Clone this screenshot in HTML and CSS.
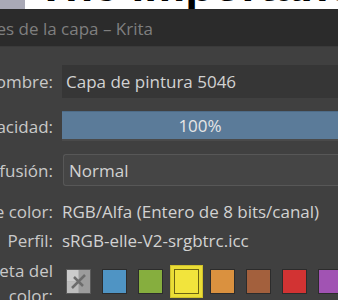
FILE: index.html
```html
<!DOCTYPE html>
<html lang="es">
<head>
  <meta charset="UTF-8">
  <title>Propiedades de la capa – Krita</title>
  <link rel="stylesheet" href="styles.css">
</head>
<body>
  <div class="backdrop">
    <div class="backdrop-tab"></div>
    <div class="backdrop-text">The importance</div>
  </div>

  <div class="titlebar">
    <div class="title">Propiedades de la capa – Krita</div>
  </div>

  <div class="dialog">
    <div class="row row-name">
      <div class="label">Nombre:</div>
      <div class="field">Capa de pintura 5046</div>
    </div>

    <div class="row row-opacity">
      <div class="label">Opacidad:</div>
      <div class="slider">100%</div>
    </div>

    <div class="row row-blend">
      <div class="label">Modo de fusión:</div>
      <div class="combo">Normal</div>
    </div>

    <div class="row row-space">
      <div class="label">Espacio de color:</div>
      <div class="value">RGB/Alfa (Entero de 8 bits/canal)</div>
    </div>

    <div class="row row-profile">
      <div class="label">Perfil:</div>
      <div class="value">sRGB-elle-V2-srgbtrc.icc</div>
    </div>

    <div class="row row-colors">
      <div class="label"><span class="label-lines">Etiqueta del<br>color:</span></div>
      <div class="swatches">
        <div class="swatch none">
          <svg width="23" height="23" viewBox="0 0 23 23">
            <rect x="0" y="0" width="23" height="23" fill="#9c9c9c"/>
            <rect x="0" y="0" width="11.5" height="11.5" fill="#cbcbcb"/>
            <rect x="0" y="11.5" width="11.5" height="11.5" fill="#bdbdbd"/>
            <path d="M5 18 L18 5 M7 7 L16 16" stroke="#6c6c6c" stroke-width="2.5"/>
          </svg>
        </div>
        <div class="swatch blue"></div>
        <div class="swatch green"></div>
        <div class="swatch-selected"><div class="swatch yellow"></div></div>
        <div class="swatch orange"></div>
        <div class="swatch brown"></div>
        <div class="swatch red"></div>
        <div class="swatch purple"></div>
      </div>
    </div>
  </div>
</body>
</html>
```

FILE: styles.css
```css
body {
  margin: 0;
  background: #404040;
  font-family: "Open Sans", "Noto Sans", sans-serif;
  overflow: hidden;
}

/* strip of the window behind the dialog */
.backdrop {
  height: 9px;
  background: #ffffff;
  display: flex;
  align-items: flex-start;
  overflow: hidden;
}

.backdrop-tab {
  width: 25px;
  height: 9px;
  flex: none;
  background: #a9a9b6;
}

.backdrop-text {
  margin-left: 12px;
  margin-top: -38px;
  font-family: "Liberation Sans", sans-serif;
  font-weight: 700;
  font-size: 46px;
  line-height: 46px;
  color: #000;
  white-space: nowrap;
}

.titlebar {
  height: 37px;
  background: #2b2b2b;
  border-bottom: 1px solid #3a3a3a;
  display: flex;
  align-items: center;
}

.title {
  width: 153px;
  display: flex;
  justify-content: flex-end;
  white-space: nowrap;
  color: #7f7f7f;
  font-size: 17px;
  margin-top: 1px;
}

.dialog {
  padding-top: 18px;
  color: #d2d2d2;
  font-size: 17px;
}

.row {
  display: flex;
  align-items: center;
  gap: 9px;
}

.label {
  width: 53px;
  flex: none;
  display: flex;
  justify-content: flex-end;
  white-space: nowrap;
  color: #c9c9c9;
}

.row-name { height: 33px; margin-bottom: 13px; }
.row-opacity { height: 30px; margin-bottom: 13px; }
.row-blend { height: 32px; margin-bottom: 10px; }
.row-space { height: 30px; }
.row-profile { height: 28px; }
.row-colors { align-items: flex-start; margin-top: 4px; }

.label-lines {
  text-align: right;
  line-height: 25px;
}

.field {
  flex: 1;
  height: 100%;
  background: #363636;
  display: flex;
  align-items: center;
  padding-left: 4px;
}

.slider {
  flex: 1;
  height: 27px;
  background: #5b7b99;
  border-top: 1px solid #4e6c88;
  border-bottom: 2px solid #4a4a4a;
  display: flex;
  align-items: center;
  justify-content: center;
  color: #e6e6e6;
}

.combo {
  flex: 1;
  height: 30px;
  margin-left: 1px;
  background: #454545;
  border: 1px solid #575757;
  border-right: none;
  border-radius: 3px 0 0 3px;
  display: flex;
  align-items: center;
  padding-left: 5px;
}

.value {
  flex: 1;
  white-space: nowrap;
}

.swatches {
  display: flex;
  align-items: center;
  gap: 11px;
  padding-left: 4px;
  margin-top: 7px;
  height: 33px;
}

.swatch {
  width: 23px;
  height: 23px;
  flex: none;
  border: 1px solid #2c2c2c;
}

.swatch.none {
  border-color: #5a5a5a;
}

.swatch.none svg {
  display: block;
}

.swatch-selected {
  flex: none;
  padding: 3px;
  background: #eadd36;
  border: 1px solid #cfc02a;
  margin: 0 -4px;
}

.blue { background: #4f94c4; }
.green { background: #86ae3e; }
.yellow { background: #f2e43c; border-color: #6b6212; }
.orange { background: #da913f; }
.brown { background: #a3603d; }
.red { background: #d23333; }
.purple { background: #a153b3; }
```
